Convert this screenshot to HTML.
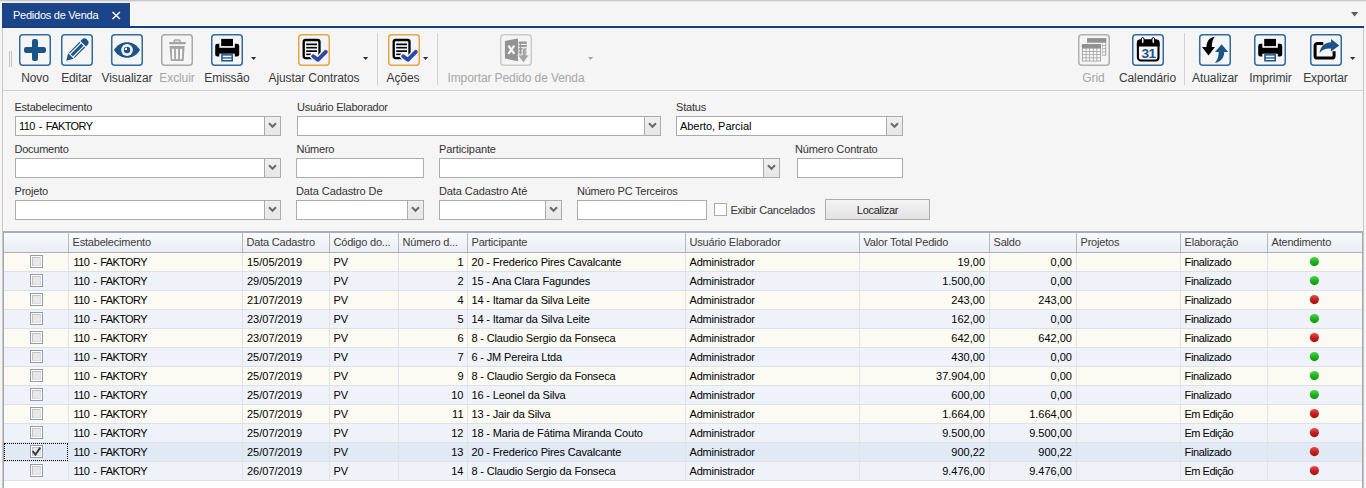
<!DOCTYPE html><html><head><meta charset="utf-8"><style>
html,body{margin:0;padding:0;}
body{width:1366px;height:488px;overflow:hidden;position:relative;background:#f5f5f5;font-family:"Liberation Sans",sans-serif;}
.t{position:absolute;white-space:nowrap;font-family:"Liberation Sans",sans-serif;}
.r{position:absolute;}
svg{position:absolute;}
</style></head><body>
<div class="r" style="left:0px;top:0px;width:1366px;height:1px;background:#c9c9c9;"></div>
<div class="r" style="left:0px;top:1px;width:1366px;height:1px;background:#e6e6e6;"></div>
<div class="r" style="left:2px;top:3px;width:128px;height:25px;background:#1b4588;"></div>
<div class="r" style="left:130px;top:3px;width:1px;height:23px;background:#ffffff;"></div>
<div class="r" style="left:130px;top:25px;width:1234px;height:1px;background:#ffffff;"></div>
<div class="r" style="left:2px;top:26px;width:1362px;height:2px;background:#133f85;"></div>
<div class="t" style="left:13px;top:8.69px;font-size:11px;line-height:13px;color:#fff;letter-spacing:-0.25px;">Pedidos de Venda</div>
<svg style="left:111px;top:11px" width="11" height="9" viewBox="0 0 11 9"><path d="M1.5 1 L9 8 M9 1 L1.5 8" stroke="#fff" stroke-width="1.4"/></svg>
<svg style="left:1350px;top:12px" width="9" height="6" viewBox="0 0 9 6"><path d="M1 0 H8.2 L4.6 4.4 Z" fill="#5c5c5c"/></svg>
<div class="r" style="left:2px;top:28px;width:1px;height:460px;background:#c6c6c6;"></div>
<div class="r" style="left:1363px;top:28px;width:1px;height:460px;background:#c6c6c6;"></div>
<div class="r" style="left:3px;top:90px;width:1360px;height:1px;background:#cfcfcf;"></div>
<div class="r" style="left:3px;top:91px;width:1360px;height:1px;background:#fbfbfb;"></div>
<div class="r" style="left:9px;top:51px;width:1px;height:16px;background:#c4c4c4;"></div>
<div class="r" style="left:11px;top:51px;width:1px;height:16px;background:#c4c4c4;"></div>
<svg style="left:19px;top:34px" width="32" height="32" viewBox="0 0 32 32"><rect x="0.75" y="0.75" width="30.5" height="30.5" rx="3" ry="3" fill="none" stroke="#2f6b9c" stroke-width="1.5"/><rect x="13" y="5" width="6" height="22" rx="2.2" fill="#1a5488"/><rect x="5" y="13" width="22" height="6" rx="2.2" fill="#1a5488"/></svg>
<svg style="left:61px;top:34px" width="32" height="32" viewBox="0 0 32 32"><rect x="0.75" y="0.75" width="30.5" height="30.5" rx="3" ry="3" fill="none" stroke="#2f6b9c" stroke-width="1.5"/><g transform="rotate(-45 16 16)"><path d="M0.8 16 L7.4 12.1 L7.4 19.9 Z" fill="#1a5488"/><rect x="8.6" y="12.1" width="15" height="1.1" fill="#1a5488"/><rect x="8.6" y="14.5" width="15" height="3" fill="#1a5488"/><rect x="8.6" y="18.8" width="15" height="1.1" fill="#1a5488"/><path d="M24.8 12.1 H26.6 A3.9 3.9 0 0 1 26.6 19.9 H24.8 Z" fill="#1a5488"/></g></svg>
<svg style="left:111px;top:34px" width="32" height="32" viewBox="0 0 32 32"><rect x="0.75" y="0.75" width="30.5" height="30.5" rx="3" ry="3" fill="none" stroke="#2f6b9c" stroke-width="1.5"/><path d="M3 16 C9 5.6 23 5.6 29 16 C23 26.4 9 26.4 3 16 Z" fill="#1a5488"/><circle cx="16" cy="16" r="5.9" fill="#f5f5f5"/><circle cx="16" cy="16" r="3.2" fill="#1a5488"/><path d="M16 16 L16 13.6 A2.4 2.4 0 0 0 13.6 16 Z" fill="#f5f5f5"/></svg>
<svg style="left:161px;top:34px" width="32" height="32" viewBox="0 0 32 32"><rect x="0.75" y="0.75" width="30.5" height="30.5" rx="3" ry="3" fill="none" stroke="#a8a8a8" stroke-width="1.5"/><rect x="13.2" y="5.9" width="5.8" height="2.6" rx="1" fill="none" stroke="#a3a3a3" stroke-width="1.5"/><rect x="8" y="7.9" width="17" height="2.4" rx="1.2" fill="#a3a3a3"/><path d="M8.5 12 H23.6 L22.7 26 Q22.6 27 21.6 27 H10.8 Q9.8 27 9.7 26 Z" fill="#a3a3a3"/><path d="M10.8 14.8 H13.1 L13.2 25.2 H11.1 Z" fill="#f5f5f5"/><rect x="14.9" y="14.8" width="2.2" height="10.4" fill="#f5f5f5"/><path d="M19 14.8 H21.3 L21 25.2 H18.9 Z" fill="#f5f5f5"/></svg>
<svg style="left:211px;top:34px" width="32" height="32" viewBox="0 0 32 32"><rect x="0.75" y="0.75" width="30.5" height="30.5" rx="3" ry="3" fill="none" stroke="#2f6b9c" stroke-width="1.5"/><rect x="10.2" y="4.9" width="11.8" height="7.2" fill="#000"/><path d="M8.3 9.8 H6.5 A2.3 2.3 0 0 0 4.2 12.1 V20.3 A2.3 2.3 0 0 0 6.5 22.6 H8.3 Z" fill="#000"/><path d="M23.8 9.8 H25.9 A2.3 2.3 0 0 1 28.2 12.1 V20.3 A2.3 2.3 0 0 1 25.9 22.6 H23.8 Z" fill="#000"/><rect x="8" y="13.8" width="16" height="5.9" fill="#000"/><rect x="10.2" y="20.1" width="11.8" height="7.4" fill="#1a5488"/><rect x="11.7" y="21.6" width="8.8" height="1.7" fill="#f5f5f5"/><rect x="11.7" y="24.6" width="8.8" height="1.4" fill="#f5f5f5"/></svg>
<svg style="left:251px;top:57px" width="6" height="4" viewBox="0 0 6 4"><path d="M0 0 H5.2 L2.6 3 Z" fill="#2e2e2e"/></svg>
<svg style="left:298px;top:34px" width="32" height="32" viewBox="0 0 32 32"><rect x="0.75" y="0.75" width="30.5" height="30.5" rx="3" fill="#f2f4f9"/><rect x="5.7" y="6" width="15.8" height="18.1" rx="2" fill="none" stroke="#000" stroke-width="2.3"/><rect x="8.2" y="9.5" width="10.8" height="1.7" fill="#000"/><rect x="8.2" y="12.9" width="10.8" height="1.6" fill="#000"/><rect x="8.2" y="16.3" width="10.8" height="1.7" fill="#000"/><rect x="8.2" y="19.6" width="4.8" height="1.5" fill="#000"/><path d="M15.2 22.3 L19.8 25.8 L27.8 17.8" fill="none" stroke="#f2f4f9" stroke-width="6.4" stroke-linecap="round" stroke-linejoin="round"/><path d="M15.2 22.3 L19.8 25.8 L27.8 17.8" fill="none" stroke="#2e49a3" stroke-width="3.9" stroke-linecap="round" stroke-linejoin="round"/><rect x="0.75" y="0.75" width="30.5" height="30.5" rx="3" fill="none" stroke="#e8a63e" stroke-width="1.5"/></svg>
<svg style="left:363px;top:57px" width="6" height="4" viewBox="0 0 6 4"><path d="M0 0 H5.2 L2.6 3 Z" fill="#2e2e2e"/></svg>
<div class="r" style="left:377px;top:33px;width:1px;height:52px;background:#d2d2d2;"></div>
<svg style="left:388px;top:34px" width="32" height="32" viewBox="0 0 32 32"><rect x="0.75" y="0.75" width="30.5" height="30.5" rx="3" fill="#f2f4f9"/><rect x="5.7" y="6" width="15.8" height="18.1" rx="2" fill="none" stroke="#000" stroke-width="2.3"/><rect x="8.2" y="9.5" width="10.8" height="1.7" fill="#000"/><rect x="8.2" y="12.9" width="10.8" height="1.6" fill="#000"/><rect x="8.2" y="16.3" width="10.8" height="1.7" fill="#000"/><rect x="8.2" y="19.6" width="4.8" height="1.5" fill="#000"/><path d="M15.2 22.3 L19.8 25.8 L27.8 17.8" fill="none" stroke="#f2f4f9" stroke-width="6.4" stroke-linecap="round" stroke-linejoin="round"/><path d="M15.2 22.3 L19.8 25.8 L27.8 17.8" fill="none" stroke="#2e49a3" stroke-width="3.9" stroke-linecap="round" stroke-linejoin="round"/><rect x="0.75" y="0.75" width="30.5" height="30.5" rx="3" fill="none" stroke="#e8a63e" stroke-width="1.5"/></svg>
<svg style="left:423px;top:57px" width="6" height="4" viewBox="0 0 6 4"><path d="M0 0 H5.2 L2.6 3 Z" fill="#2e2e2e"/></svg>
<div class="r" style="left:437px;top:33px;width:1px;height:52px;background:#d2d2d2;"></div>
<svg style="left:500px;top:34px" width="32" height="32" viewBox="0 0 32 32"><rect x="0.75" y="0.75" width="30.5" height="30.5" rx="3" ry="3" fill="none" stroke="#cbcbcb" stroke-width="1.5"/><path d="M4.9 6.9 L18 4.6 V27.2 L4.9 24.6 Z" fill="#939393"/><path d="M8.4 11.6 L14.3 19.9 M14.3 11.6 L8.4 19.9" stroke="#f5f5f5" stroke-width="2.3"/><rect x="18.7" y="7.5" width="8.2" height="14.5" fill="#989898"/><rect x="18.7" y="9.9" width="1.3" height="1" fill="#f5f5f5"/><rect x="21" y="9.9" width="5.9" height="1" fill="#f5f5f5"/><rect x="18.7" y="13.1" width="1.3" height="1" fill="#f5f5f5"/><rect x="21" y="13.1" width="5.9" height="1" fill="#f5f5f5"/><rect x="18.7" y="16.3" width="1.3" height="1" fill="#f5f5f5"/><rect x="21" y="16.3" width="5.9" height="1" fill="#f5f5f5"/><rect x="18.7" y="19.4" width="1.3" height="1" fill="#f5f5f5"/><rect x="21" y="19.4" width="5.9" height="1" fill="#f5f5f5"/><path d="M22.3 15.2 L26.2 12.8 L26.2 21 L29.2 21 L23.4 28.9 L17.7 21 L22.3 21 Z" fill="#a4a4a4" stroke="#f5f5f5" stroke-width="0.8"/></svg>
<svg style="left:588px;top:57px" width="6" height="4" viewBox="0 0 6 4"><path d="M0 0 H5.2 L2.6 3 Z" fill="#a8a8a8"/></svg>
<svg style="left:1078px;top:34px" width="32" height="32" viewBox="0 0 32 32"><rect x="0.75" y="0.75" width="30.5" height="30.5" rx="3" ry="3" fill="none" stroke="#b0b0b0" stroke-width="1.5"/><rect x="9.2" y="4.3" width="19" height="17.3" fill="#9f9f9f"/><rect x="9.2" y="4.3" width="19" height="3.6" fill="#8f8f8f"/><rect x="10.10" y="8.80" width="2.80" height="2.38" fill="#f8f8f8"/><rect x="10.10" y="11.98" width="2.80" height="2.38" fill="#f8f8f8"/><rect x="10.10" y="15.15" width="2.80" height="2.38" fill="#f8f8f8"/><rect x="10.10" y="18.33" width="2.80" height="2.38" fill="#f8f8f8"/><rect x="13.70" y="8.80" width="2.80" height="2.38" fill="#f8f8f8"/><rect x="13.70" y="11.98" width="2.80" height="2.38" fill="#f8f8f8"/><rect x="13.70" y="15.15" width="2.80" height="2.38" fill="#f8f8f8"/><rect x="13.70" y="18.33" width="2.80" height="2.38" fill="#f8f8f8"/><rect x="17.30" y="8.80" width="2.80" height="2.38" fill="#f8f8f8"/><rect x="17.30" y="11.98" width="2.80" height="2.38" fill="#f8f8f8"/><rect x="17.30" y="15.15" width="2.80" height="2.38" fill="#f8f8f8"/><rect x="17.30" y="18.33" width="2.80" height="2.38" fill="#f8f8f8"/><rect x="20.90" y="8.80" width="2.80" height="2.38" fill="#f8f8f8"/><rect x="20.90" y="11.98" width="2.80" height="2.38" fill="#f8f8f8"/><rect x="20.90" y="15.15" width="2.80" height="2.38" fill="#f8f8f8"/><rect x="20.90" y="18.33" width="2.80" height="2.38" fill="#f8f8f8"/><rect x="24.50" y="8.80" width="2.80" height="2.38" fill="#f8f8f8"/><rect x="24.50" y="11.98" width="2.80" height="2.38" fill="#f8f8f8"/><rect x="24.50" y="15.15" width="2.80" height="2.38" fill="#f8f8f8"/><rect x="24.50" y="18.33" width="2.80" height="2.38" fill="#f8f8f8"/><rect x="2.9" y="9.2" width="21.1" height="19.3" fill="#f5f5f5"/><rect x="3.9" y="10.2" width="19.1" height="17.3" fill="#9f9f9f"/><rect x="3.9" y="10.2" width="19.1" height="3.6" fill="#8f8f8f"/><rect x="4.80" y="14.70" width="2.82" height="2.38" fill="#f8f8f8"/><rect x="4.80" y="17.88" width="2.82" height="2.38" fill="#f8f8f8"/><rect x="4.80" y="21.05" width="2.82" height="2.38" fill="#f8f8f8"/><rect x="4.80" y="24.23" width="2.82" height="2.38" fill="#f8f8f8"/><rect x="8.42" y="14.70" width="2.82" height="2.38" fill="#f8f8f8"/><rect x="8.42" y="17.88" width="2.82" height="2.38" fill="#f8f8f8"/><rect x="8.42" y="21.05" width="2.82" height="2.38" fill="#f8f8f8"/><rect x="8.42" y="24.23" width="2.82" height="2.38" fill="#f8f8f8"/><rect x="12.04" y="14.70" width="2.82" height="2.38" fill="#f8f8f8"/><rect x="12.04" y="17.88" width="2.82" height="2.38" fill="#f8f8f8"/><rect x="12.04" y="21.05" width="2.82" height="2.38" fill="#f8f8f8"/><rect x="12.04" y="24.23" width="2.82" height="2.38" fill="#f8f8f8"/><rect x="15.66" y="14.70" width="2.82" height="2.38" fill="#f8f8f8"/><rect x="15.66" y="17.88" width="2.82" height="2.38" fill="#f8f8f8"/><rect x="15.66" y="21.05" width="2.82" height="2.38" fill="#f8f8f8"/><rect x="15.66" y="24.23" width="2.82" height="2.38" fill="#f8f8f8"/><rect x="19.28" y="14.70" width="2.82" height="2.38" fill="#f8f8f8"/><rect x="19.28" y="17.88" width="2.82" height="2.38" fill="#f8f8f8"/><rect x="19.28" y="21.05" width="2.82" height="2.38" fill="#f8f8f8"/><rect x="19.28" y="24.23" width="2.82" height="2.38" fill="#f8f8f8"/></svg>
<svg style="left:1132px;top:34px" width="32" height="32" viewBox="0 0 32 32"><rect x="0.75" y="0.75" width="30.5" height="30.5" rx="3" ry="3" fill="none" stroke="#2f6b9c" stroke-width="1.5"/><rect x="5.9" y="6.6" width="20.6" height="19.9" rx="3" fill="none" stroke="#000" stroke-width="2.1"/><path d="M4.9 12.5 V8.6 A3 3 0 0 1 7.9 5.6 H24.5 A3 3 0 0 1 27.5 8.6 V12.5 Z" fill="#000"/><rect x="9.4" y="3.6" width="2.6" height="5.8" rx="1.3" fill="#f5f5f5" stroke="#000" stroke-width="1"/><rect x="20" y="3.6" width="2.6" height="5.8" rx="1.3" fill="#f5f5f5" stroke="#000" stroke-width="1"/><text x="16.5" y="23.8" text-anchor="middle" font-family="Liberation Sans" font-weight="bold" font-size="13.6" fill="#1a5488" letter-spacing="-0.5">31</text></svg>
<div class="r" style="left:1184px;top:33px;width:1px;height:52px;background:#d2d2d2;"></div>
<svg style="left:1199px;top:34px" width="32" height="32" viewBox="0 0 32 32"><rect x="0.75" y="0.75" width="30.5" height="30.5" rx="3" ry="3" fill="none" stroke="#2f6b9c" stroke-width="1.5"/><path d="M15.7 2.8 C10 3.5 7.5 8 7.5 13.1 L3 13.1 L9.5 21.6 L16 13.1 L12.8 13.1 C12.8 9 13.5 5.5 15.7 2.8 Z" fill="#000"/><path d="M16 28.9 C22 28 25.2 23.5 25.2 18 L29.2 18 L22.6 10.2 L16 18 L19.7 18 C19.7 22.5 18.5 26 16 28.9 Z" fill="#1a5488"/></svg>
<svg style="left:1254px;top:34px" width="32" height="32" viewBox="0 0 32 32"><rect x="0.75" y="0.75" width="30.5" height="30.5" rx="3" ry="3" fill="none" stroke="#2f6b9c" stroke-width="1.5"/><rect x="10.2" y="4.9" width="11.8" height="7.2" fill="#000"/><path d="M8.3 9.8 H6.5 A2.3 2.3 0 0 0 4.2 12.1 V20.3 A2.3 2.3 0 0 0 6.5 22.6 H8.3 Z" fill="#000"/><path d="M23.8 9.8 H25.9 A2.3 2.3 0 0 1 28.2 12.1 V20.3 A2.3 2.3 0 0 1 25.9 22.6 H23.8 Z" fill="#000"/><rect x="8" y="13.8" width="16" height="5.9" fill="#000"/><rect x="10.2" y="20.1" width="11.8" height="7.4" fill="#1a5488"/><rect x="11.7" y="21.6" width="8.8" height="1.7" fill="#f5f5f5"/><rect x="11.7" y="24.6" width="8.8" height="1.4" fill="#f5f5f5"/></svg>
<svg style="left:1310px;top:34px" width="32" height="32" viewBox="0 0 32 32"><rect x="0.75" y="0.75" width="30.5" height="30.5" rx="3" ry="3" fill="none" stroke="#2f6b9c" stroke-width="1.5"/><path d="M13.3 9.4 H7.3 A2.2 2.2 0 0 0 5.1 11.6 V21.9 A2.2 2.2 0 0 0 7.3 24.1 H21.9 A2.2 2.2 0 0 0 24.1 21.9 V17.2" fill="none" stroke="#000" stroke-width="3"/><path d="M9.6 19 C10.5 12 15 8.6 21 8.3 L21 4.9 L29.3 11.5 L21 17.6 L21 14.6 C16 14.3 12 15.8 9.6 19 Z" fill="#1a5488"/></svg>
<svg style="left:1350px;top:57px" width="6" height="4" viewBox="0 0 6 4"><path d="M0 0 H5.2 L2.6 3 Z" fill="#2e2e2e"/></svg>
<div class="t" style="left:-165px;width:400px;text-align:center;top:70.84px;font-size:12px;line-height:14px;color:#3a3a3a;letter-spacing:-0.1px;">Novo</div>
<div class="t" style="left:-123.5px;width:400px;text-align:center;top:70.84px;font-size:12px;line-height:14px;color:#3a3a3a;letter-spacing:-0.1px;">Editar</div>
<div class="t" style="left:-73px;width:400px;text-align:center;top:70.84px;font-size:12px;line-height:14px;color:#3a3a3a;letter-spacing:-0.1px;">Visualizar</div>
<div class="t" style="left:-23px;width:400px;text-align:center;top:70.84px;font-size:12px;line-height:14px;color:#a6a6a6;letter-spacing:-0.1px;">Excluir</div>
<div class="t" style="left:27px;width:400px;text-align:center;top:70.84px;font-size:12px;line-height:14px;color:#3a3a3a;letter-spacing:-0.1px;">Emissão</div>
<div class="t" style="left:114px;width:400px;text-align:center;top:70.84px;font-size:12px;line-height:14px;color:#3a3a3a;letter-spacing:-0.1px;">Ajustar Contratos</div>
<div class="t" style="left:203px;width:400px;text-align:center;top:70.84px;font-size:12px;line-height:14px;color:#3a3a3a;letter-spacing:-0.1px;">Ações</div>
<div class="t" style="left:316px;width:400px;text-align:center;top:70.84px;font-size:12px;line-height:14px;color:#a6a6a6;letter-spacing:-0.1px;">Importar Pedido de Venda</div>
<div class="t" style="left:893.5px;width:400px;text-align:center;top:70.84px;font-size:12px;line-height:14px;color:#a6a6a6;letter-spacing:-0.1px;">Grid</div>
<div class="t" style="left:947.5px;width:400px;text-align:center;top:70.84px;font-size:12px;line-height:14px;color:#3a3a3a;letter-spacing:-0.1px;">Calendário</div>
<div class="t" style="left:1015px;width:400px;text-align:center;top:70.84px;font-size:12px;line-height:14px;color:#3a3a3a;letter-spacing:-0.1px;">Atualizar</div>
<div class="t" style="left:1070.5px;width:400px;text-align:center;top:70.84px;font-size:12px;line-height:14px;color:#3a3a3a;letter-spacing:-0.1px;">Imprimir</div>
<div class="t" style="left:1125.5px;width:400px;text-align:center;top:70.84px;font-size:12px;line-height:14px;color:#3a3a3a;letter-spacing:-0.1px;">Exportar</div>
<div class="r" style="left:3px;top:92px;width:1px;height:139px;background:#fafafa;"></div>
<div class="t" style="left:14.5px;top:100.69px;font-size:11px;line-height:13px;color:#333;letter-spacing:-0.25px;">Estabelecimento</div>
<div class="r" style="left:15px;top:116px;width:266px;height:20px;background:#fff;border:1px solid #ababab;box-sizing:border-box;"></div>
<div class="r" style="left:264px;top:116px;width:17px;height:20px;background:linear-gradient(#efefef,#e6e6e6);border:1px solid #ababab;box-sizing:border-box;"></div>
<svg style="left:268px;top:122px" width="9" height="7" viewBox="0 0 9 7"><path d="M1 1.2 L4.5 4.8 L8 1.2" fill="none" stroke="#6a6a6a" stroke-width="2"/></svg>
<div class="t" style="left:19px;top:119.69px;font-size:11px;line-height:13px;color:#000;letter-spacing:-0.62px;word-spacing:1.6px;">110 - FAKTORY</div>
<div class="t" style="left:297px;top:100.69px;font-size:11px;line-height:13px;color:#333;letter-spacing:-0.22px;">Usuário Elaborador</div>
<div class="r" style="left:297px;top:116px;width:364px;height:20px;background:#fff;border:1px solid #ababab;box-sizing:border-box;"></div>
<div class="r" style="left:644px;top:116px;width:17px;height:20px;background:linear-gradient(#efefef,#e6e6e6);border:1px solid #ababab;box-sizing:border-box;"></div>
<svg style="left:648px;top:122px" width="9" height="7" viewBox="0 0 9 7"><path d="M1 1.2 L4.5 4.8 L8 1.2" fill="none" stroke="#6a6a6a" stroke-width="2"/></svg>
<div class="t" style="left:676px;top:100.69px;font-size:11px;line-height:13px;color:#333;letter-spacing:-0.2px;">Status</div>
<div class="r" style="left:676px;top:116px;width:227px;height:20px;background:#fff;border:1px solid #ababab;box-sizing:border-box;"></div>
<div class="r" style="left:886px;top:116px;width:17px;height:20px;background:linear-gradient(#efefef,#e6e6e6);border:1px solid #ababab;box-sizing:border-box;"></div>
<svg style="left:890px;top:122px" width="9" height="7" viewBox="0 0 9 7"><path d="M1 1.2 L4.5 4.8 L8 1.2" fill="none" stroke="#6a6a6a" stroke-width="2"/></svg>
<div class="t" style="left:680px;top:119.69px;font-size:11px;line-height:13px;color:#000;letter-spacing:-0.05px;">Aberto, Parcial</div>
<div class="t" style="left:14.5px;top:142.69px;font-size:11px;line-height:13px;color:#333;letter-spacing:-0.25px;">Documento</div>
<div class="r" style="left:15px;top:158px;width:266px;height:20px;background:#fff;border:1px solid #ababab;box-sizing:border-box;"></div>
<div class="r" style="left:264px;top:158px;width:17px;height:20px;background:linear-gradient(#efefef,#e6e6e6);border:1px solid #ababab;box-sizing:border-box;"></div>
<svg style="left:268px;top:164px" width="9" height="7" viewBox="0 0 9 7"><path d="M1 1.2 L4.5 4.8 L8 1.2" fill="none" stroke="#6a6a6a" stroke-width="2"/></svg>
<div class="t" style="left:296.5px;top:142.69px;font-size:11px;line-height:13px;color:#333;letter-spacing:-0.24px;">Número</div>
<div class="r" style="left:296px;top:158px;width:128px;height:20px;background:#fff;border:1px solid #ababab;box-sizing:border-box;"></div>
<div class="t" style="left:439px;top:142.69px;font-size:11px;line-height:13px;color:#333;letter-spacing:-0.1px;">Participante</div>
<div class="r" style="left:439px;top:158px;width:341px;height:20px;background:#fff;border:1px solid #ababab;box-sizing:border-box;"></div>
<div class="r" style="left:763px;top:158px;width:17px;height:20px;background:linear-gradient(#efefef,#e6e6e6);border:1px solid #ababab;box-sizing:border-box;"></div>
<svg style="left:767px;top:164px" width="9" height="7" viewBox="0 0 9 7"><path d="M1 1.2 L4.5 4.8 L8 1.2" fill="none" stroke="#6a6a6a" stroke-width="2"/></svg>
<div class="t" style="left:795px;top:142.69px;font-size:11px;line-height:13px;color:#333;letter-spacing:-0.12px;">Número Contrato</div>
<div class="r" style="left:797px;top:158px;width:106px;height:20px;background:#fff;border:1px solid #ababab;box-sizing:border-box;"></div>
<div class="t" style="left:14.5px;top:184.69px;font-size:11px;line-height:13px;color:#333;letter-spacing:-0.2px;">Projeto</div>
<div class="r" style="left:15px;top:200px;width:266px;height:20px;background:#fff;border:1px solid #ababab;box-sizing:border-box;"></div>
<div class="r" style="left:264px;top:200px;width:17px;height:20px;background:linear-gradient(#efefef,#e6e6e6);border:1px solid #ababab;box-sizing:border-box;"></div>
<svg style="left:268px;top:206px" width="9" height="7" viewBox="0 0 9 7"><path d="M1 1.2 L4.5 4.8 L8 1.2" fill="none" stroke="#6a6a6a" stroke-width="2"/></svg>
<div class="t" style="left:296px;top:184.69px;font-size:11px;line-height:13px;color:#333;letter-spacing:-0.1px;">Data Cadastro De</div>
<div class="r" style="left:296px;top:200px;width:128px;height:20px;background:#fff;border:1px solid #ababab;box-sizing:border-box;"></div>
<div class="r" style="left:407px;top:200px;width:17px;height:20px;background:linear-gradient(#efefef,#e6e6e6);border:1px solid #ababab;box-sizing:border-box;"></div>
<svg style="left:411px;top:206px" width="9" height="7" viewBox="0 0 9 7"><path d="M1 1.2 L4.5 4.8 L8 1.2" fill="none" stroke="#6a6a6a" stroke-width="2"/></svg>
<div class="t" style="left:439px;top:184.69px;font-size:11px;line-height:13px;color:#333;letter-spacing:-0.1px;">Data Cadastro Até</div>
<div class="r" style="left:439px;top:200px;width:123px;height:20px;background:#fff;border:1px solid #ababab;box-sizing:border-box;"></div>
<div class="r" style="left:545px;top:200px;width:17px;height:20px;background:linear-gradient(#efefef,#e6e6e6);border:1px solid #ababab;box-sizing:border-box;"></div>
<svg style="left:549px;top:206px" width="9" height="7" viewBox="0 0 9 7"><path d="M1 1.2 L4.5 4.8 L8 1.2" fill="none" stroke="#6a6a6a" stroke-width="2"/></svg>
<div class="t" style="left:577px;top:184.69px;font-size:11px;line-height:13px;color:#333;letter-spacing:-0.23px;">Número PC Terceiros</div>
<div class="r" style="left:577px;top:200px;width:130px;height:20px;background:#fff;border:1px solid #ababab;box-sizing:border-box;"></div>
<div class="r" style="left:714px;top:203px;width:13px;height:13px;background:#fff;border:1px solid #a9a9a9;box-sizing:border-box;"></div>
<div class="t" style="left:730.5px;top:203.69px;font-size:11px;line-height:13px;color:#333;letter-spacing:-0.25px;">Exibir Cancelados</div>
<div class="r" style="left:825px;top:199px;width:105px;height:21px;background:linear-gradient(#f3f3f3,#e3e3e3);border:1px solid #adadad;box-sizing:border-box;"></div>
<div class="t" style="left:677.5px;width:400px;text-align:center;top:203.69px;font-size:11px;line-height:13px;color:#222;letter-spacing:-0.3px;">Localizar</div>
<div class="r" style="left:3px;top:231px;width:1360px;height:2px;background:#a9aeb5;"></div>
<div class="r" style="left:3px;top:231px;width:1px;height:257px;background:#a4a9b0;"></div>
<div class="r" style="left:1362px;top:231px;width:1px;height:257px;background:#a4a9b0;"></div>
<div class="r" style="left:4px;top:233px;width:1358px;height:19px;background:linear-gradient(#f9fafc,#e9edf3);"></div>
<div class="r" style="left:4px;top:252px;width:1358px;height:1px;background:#acb2ba;"></div>
<div class="r" style="left:68px;top:233px;width:1px;height:19px;background:#b4bac2;"></div>
<div class="r" style="left:242px;top:233px;width:1px;height:19px;background:#b4bac2;"></div>
<div class="r" style="left:329px;top:233px;width:1px;height:19px;background:#b4bac2;"></div>
<div class="r" style="left:398px;top:233px;width:1px;height:19px;background:#b4bac2;"></div>
<div class="r" style="left:467px;top:233px;width:1px;height:19px;background:#b4bac2;"></div>
<div class="r" style="left:685px;top:233px;width:1px;height:19px;background:#b4bac2;"></div>
<div class="r" style="left:859px;top:233px;width:1px;height:19px;background:#b4bac2;"></div>
<div class="r" style="left:989px;top:233px;width:1px;height:19px;background:#b4bac2;"></div>
<div class="r" style="left:1076px;top:233px;width:1px;height:19px;background:#b4bac2;"></div>
<div class="r" style="left:1180px;top:233px;width:1px;height:19px;background:#b4bac2;"></div>
<div class="r" style="left:1267px;top:233px;width:1px;height:19px;background:#b4bac2;"></div>
<div class="t" style="left:72.5px;top:235.69px;font-size:11px;line-height:13px;color:#3b3b3b;letter-spacing:-0.2px;">Estabelecimento</div>
<div class="t" style="left:246.5px;top:235.69px;font-size:11px;line-height:13px;color:#3b3b3b;letter-spacing:-0.2px;">Data Cadastro</div>
<div class="t" style="left:333.5px;top:235.69px;font-size:11px;line-height:13px;color:#3b3b3b;letter-spacing:-0.2px;">Código do...</div>
<div class="t" style="left:402.5px;top:235.69px;font-size:11px;line-height:13px;color:#3b3b3b;letter-spacing:-0.2px;">Número d...</div>
<div class="t" style="left:471.5px;top:235.69px;font-size:11px;line-height:13px;color:#3b3b3b;letter-spacing:-0.2px;">Participante</div>
<div class="t" style="left:689.5px;top:235.69px;font-size:11px;line-height:13px;color:#3b3b3b;letter-spacing:-0.2px;">Usuário Elaborador</div>
<div class="t" style="left:863.5px;top:235.69px;font-size:11px;line-height:13px;color:#3b3b3b;letter-spacing:-0.2px;">Valor Total Pedido</div>
<div class="t" style="left:993.5px;top:235.69px;font-size:11px;line-height:13px;color:#3b3b3b;letter-spacing:-0.2px;">Saldo</div>
<div class="t" style="left:1080.5px;top:235.69px;font-size:11px;line-height:13px;color:#3b3b3b;letter-spacing:-0.2px;">Projetos</div>
<div class="t" style="left:1184.5px;top:235.69px;font-size:11px;line-height:13px;color:#3b3b3b;letter-spacing:-0.2px;">Elaboração</div>
<div class="t" style="left:1271.5px;top:235.69px;font-size:11px;line-height:13px;color:#3b3b3b;letter-spacing:-0.2px;">Atendimento</div>
<div class="r" style="left:4px;top:481px;width:1358px;height:7px;background:#ffffff;"></div>
<div class="r" style="left:4px;top:253px;width:1358px;height:18px;background:#fbfaf3;"></div>
<div class="r" style="left:4px;top:271px;width:1358px;height:1px;background:#dde0e5;"></div>
<div class="r" style="left:68px;top:253px;width:1px;height:18px;background:#dfe2e7;"></div>
<div class="r" style="left:242px;top:253px;width:1px;height:18px;background:#dfe2e7;"></div>
<div class="r" style="left:329px;top:253px;width:1px;height:18px;background:#dfe2e7;"></div>
<div class="r" style="left:398px;top:253px;width:1px;height:18px;background:#dfe2e7;"></div>
<div class="r" style="left:467px;top:253px;width:1px;height:18px;background:#dfe2e7;"></div>
<div class="r" style="left:685px;top:253px;width:1px;height:18px;background:#dfe2e7;"></div>
<div class="r" style="left:859px;top:253px;width:1px;height:18px;background:#dfe2e7;"></div>
<div class="r" style="left:989px;top:253px;width:1px;height:18px;background:#dfe2e7;"></div>
<div class="r" style="left:1076px;top:253px;width:1px;height:18px;background:#dfe2e7;"></div>
<div class="r" style="left:1180px;top:253px;width:1px;height:18px;background:#dfe2e7;"></div>
<div class="r" style="left:1267px;top:253px;width:1px;height:18px;background:#dfe2e7;"></div>
<div class="r" style="left:30px;top:255px;width:13px;height:13px;box-sizing:border-box;border:1px solid #949ca7;background:#fdfdfd"></div>
<div class="r" style="left:32px;top:257px;width:9px;height:9px;box-sizing:border-box;border:1px solid #c2c2c2;border-right-color:#dcdcdc;border-bottom-color:#dcdcdc;background:#e8e8e8"></div>
<div class="t" style="left:73.5px;top:255.69px;font-size:11px;line-height:13px;color:#000;letter-spacing:-0.62px;word-spacing:1.6px;">110 - FAKTORY</div>
<div class="t" style="left:247px;top:255.69px;font-size:11px;line-height:13px;color:#000;letter-spacing:0px;">15/05/2019</div>
<div class="t" style="left:333.5px;top:255.69px;font-size:11px;line-height:13px;color:#000;letter-spacing:-0.2px;">PV</div>
<div class="t" style="left:63.5px;width:400px;text-align:right;top:255.69px;font-size:11px;line-height:13px;color:#000;letter-spacing:0px;">1</div>
<div class="t" style="left:471.5px;top:255.69px;font-size:11px;line-height:13px;color:#000;letter-spacing:-0.16px;">20 - Frederico Pires Cavalcante</div>
<div class="t" style="left:689.5px;top:255.69px;font-size:11px;line-height:13px;color:#000;letter-spacing:-0.2px;">Administrador</div>
<div class="t" style="left:585px;width:400px;text-align:right;top:255.69px;font-size:11px;line-height:13px;color:#000;letter-spacing:0px;">19,00</div>
<div class="t" style="left:672px;width:400px;text-align:right;top:255.69px;font-size:11px;line-height:13px;color:#000;letter-spacing:0px;">0,00</div>
<div class="t" style="left:1184.5px;top:255.69px;font-size:11px;line-height:13px;color:#000;letter-spacing:-0.33px;">Finalizado</div>
<svg style="left:1309px;top:256px" width="11" height="11" viewBox="0 0 11 11"><defs><linearGradient id="g0" x1="0" y1="0" x2="0" y2="1"><stop offset="0" stop-color="#52d452"/><stop offset="0.5" stop-color="#1fb31f"/><stop offset="1" stop-color="#139413"/></linearGradient></defs><circle cx="5.4" cy="5.6" r="4.6" fill="url(#g0)"/></svg>
<div class="r" style="left:4px;top:272px;width:1358px;height:18px;background:#eff3f9;"></div>
<div class="r" style="left:4px;top:290px;width:1358px;height:1px;background:#dde0e5;"></div>
<div class="r" style="left:68px;top:272px;width:1px;height:18px;background:#dfe2e7;"></div>
<div class="r" style="left:242px;top:272px;width:1px;height:18px;background:#dfe2e7;"></div>
<div class="r" style="left:329px;top:272px;width:1px;height:18px;background:#dfe2e7;"></div>
<div class="r" style="left:398px;top:272px;width:1px;height:18px;background:#dfe2e7;"></div>
<div class="r" style="left:467px;top:272px;width:1px;height:18px;background:#dfe2e7;"></div>
<div class="r" style="left:685px;top:272px;width:1px;height:18px;background:#dfe2e7;"></div>
<div class="r" style="left:859px;top:272px;width:1px;height:18px;background:#dfe2e7;"></div>
<div class="r" style="left:989px;top:272px;width:1px;height:18px;background:#dfe2e7;"></div>
<div class="r" style="left:1076px;top:272px;width:1px;height:18px;background:#dfe2e7;"></div>
<div class="r" style="left:1180px;top:272px;width:1px;height:18px;background:#dfe2e7;"></div>
<div class="r" style="left:1267px;top:272px;width:1px;height:18px;background:#dfe2e7;"></div>
<div class="r" style="left:30px;top:274px;width:13px;height:13px;box-sizing:border-box;border:1px solid #949ca7;background:#fdfdfd"></div>
<div class="r" style="left:32px;top:276px;width:9px;height:9px;box-sizing:border-box;border:1px solid #c2c2c2;border-right-color:#dcdcdc;border-bottom-color:#dcdcdc;background:#e8e8e8"></div>
<div class="t" style="left:73.5px;top:274.69px;font-size:11px;line-height:13px;color:#000;letter-spacing:-0.62px;word-spacing:1.6px;">110 - FAKTORY</div>
<div class="t" style="left:247px;top:274.69px;font-size:11px;line-height:13px;color:#000;letter-spacing:0px;">29/05/2019</div>
<div class="t" style="left:333.5px;top:274.69px;font-size:11px;line-height:13px;color:#000;letter-spacing:-0.2px;">PV</div>
<div class="t" style="left:63.5px;width:400px;text-align:right;top:274.69px;font-size:11px;line-height:13px;color:#000;letter-spacing:0px;">2</div>
<div class="t" style="left:471.5px;top:274.69px;font-size:11px;line-height:13px;color:#000;letter-spacing:-0.16px;">15 - Ana Clara Fagundes</div>
<div class="t" style="left:689.5px;top:274.69px;font-size:11px;line-height:13px;color:#000;letter-spacing:-0.2px;">Administrador</div>
<div class="t" style="left:585px;width:400px;text-align:right;top:274.69px;font-size:11px;line-height:13px;color:#000;letter-spacing:0px;">1.500,00</div>
<div class="t" style="left:672px;width:400px;text-align:right;top:274.69px;font-size:11px;line-height:13px;color:#000;letter-spacing:0px;">0,00</div>
<div class="t" style="left:1184.5px;top:274.69px;font-size:11px;line-height:13px;color:#000;letter-spacing:-0.33px;">Finalizado</div>
<svg style="left:1309px;top:275px" width="11" height="11" viewBox="0 0 11 11"><defs><linearGradient id="g1" x1="0" y1="0" x2="0" y2="1"><stop offset="0" stop-color="#52d452"/><stop offset="0.5" stop-color="#1fb31f"/><stop offset="1" stop-color="#139413"/></linearGradient></defs><circle cx="5.4" cy="5.6" r="4.6" fill="url(#g1)"/></svg>
<div class="r" style="left:4px;top:291px;width:1358px;height:18px;background:#fbfaf3;"></div>
<div class="r" style="left:4px;top:309px;width:1358px;height:1px;background:#dde0e5;"></div>
<div class="r" style="left:68px;top:291px;width:1px;height:18px;background:#dfe2e7;"></div>
<div class="r" style="left:242px;top:291px;width:1px;height:18px;background:#dfe2e7;"></div>
<div class="r" style="left:329px;top:291px;width:1px;height:18px;background:#dfe2e7;"></div>
<div class="r" style="left:398px;top:291px;width:1px;height:18px;background:#dfe2e7;"></div>
<div class="r" style="left:467px;top:291px;width:1px;height:18px;background:#dfe2e7;"></div>
<div class="r" style="left:685px;top:291px;width:1px;height:18px;background:#dfe2e7;"></div>
<div class="r" style="left:859px;top:291px;width:1px;height:18px;background:#dfe2e7;"></div>
<div class="r" style="left:989px;top:291px;width:1px;height:18px;background:#dfe2e7;"></div>
<div class="r" style="left:1076px;top:291px;width:1px;height:18px;background:#dfe2e7;"></div>
<div class="r" style="left:1180px;top:291px;width:1px;height:18px;background:#dfe2e7;"></div>
<div class="r" style="left:1267px;top:291px;width:1px;height:18px;background:#dfe2e7;"></div>
<div class="r" style="left:30px;top:293px;width:13px;height:13px;box-sizing:border-box;border:1px solid #949ca7;background:#fdfdfd"></div>
<div class="r" style="left:32px;top:295px;width:9px;height:9px;box-sizing:border-box;border:1px solid #c2c2c2;border-right-color:#dcdcdc;border-bottom-color:#dcdcdc;background:#e8e8e8"></div>
<div class="t" style="left:73.5px;top:293.69px;font-size:11px;line-height:13px;color:#000;letter-spacing:-0.62px;word-spacing:1.6px;">110 - FAKTORY</div>
<div class="t" style="left:247px;top:293.69px;font-size:11px;line-height:13px;color:#000;letter-spacing:0px;">21/07/2019</div>
<div class="t" style="left:333.5px;top:293.69px;font-size:11px;line-height:13px;color:#000;letter-spacing:-0.2px;">PV</div>
<div class="t" style="left:63.5px;width:400px;text-align:right;top:293.69px;font-size:11px;line-height:13px;color:#000;letter-spacing:0px;">4</div>
<div class="t" style="left:471.5px;top:293.69px;font-size:11px;line-height:13px;color:#000;letter-spacing:-0.16px;">14 - Itamar da Silva Leite</div>
<div class="t" style="left:689.5px;top:293.69px;font-size:11px;line-height:13px;color:#000;letter-spacing:-0.2px;">Administrador</div>
<div class="t" style="left:585px;width:400px;text-align:right;top:293.69px;font-size:11px;line-height:13px;color:#000;letter-spacing:0px;">243,00</div>
<div class="t" style="left:672px;width:400px;text-align:right;top:293.69px;font-size:11px;line-height:13px;color:#000;letter-spacing:0px;">243,00</div>
<div class="t" style="left:1184.5px;top:293.69px;font-size:11px;line-height:13px;color:#000;letter-spacing:-0.33px;">Finalizado</div>
<svg style="left:1309px;top:294px" width="11" height="11" viewBox="0 0 11 11"><defs><linearGradient id="g2" x1="0" y1="0" x2="0" y2="1"><stop offset="0" stop-color="#e65050"/><stop offset="0.5" stop-color="#c81f1f"/><stop offset="1" stop-color="#9c1111"/></linearGradient></defs><circle cx="5.4" cy="5.6" r="4.6" fill="url(#g2)"/></svg>
<div class="r" style="left:4px;top:310px;width:1358px;height:18px;background:#eff3f9;"></div>
<div class="r" style="left:4px;top:328px;width:1358px;height:1px;background:#dde0e5;"></div>
<div class="r" style="left:68px;top:310px;width:1px;height:18px;background:#dfe2e7;"></div>
<div class="r" style="left:242px;top:310px;width:1px;height:18px;background:#dfe2e7;"></div>
<div class="r" style="left:329px;top:310px;width:1px;height:18px;background:#dfe2e7;"></div>
<div class="r" style="left:398px;top:310px;width:1px;height:18px;background:#dfe2e7;"></div>
<div class="r" style="left:467px;top:310px;width:1px;height:18px;background:#dfe2e7;"></div>
<div class="r" style="left:685px;top:310px;width:1px;height:18px;background:#dfe2e7;"></div>
<div class="r" style="left:859px;top:310px;width:1px;height:18px;background:#dfe2e7;"></div>
<div class="r" style="left:989px;top:310px;width:1px;height:18px;background:#dfe2e7;"></div>
<div class="r" style="left:1076px;top:310px;width:1px;height:18px;background:#dfe2e7;"></div>
<div class="r" style="left:1180px;top:310px;width:1px;height:18px;background:#dfe2e7;"></div>
<div class="r" style="left:1267px;top:310px;width:1px;height:18px;background:#dfe2e7;"></div>
<div class="r" style="left:30px;top:312px;width:13px;height:13px;box-sizing:border-box;border:1px solid #949ca7;background:#fdfdfd"></div>
<div class="r" style="left:32px;top:314px;width:9px;height:9px;box-sizing:border-box;border:1px solid #c2c2c2;border-right-color:#dcdcdc;border-bottom-color:#dcdcdc;background:#e8e8e8"></div>
<div class="t" style="left:73.5px;top:312.69px;font-size:11px;line-height:13px;color:#000;letter-spacing:-0.62px;word-spacing:1.6px;">110 - FAKTORY</div>
<div class="t" style="left:247px;top:312.69px;font-size:11px;line-height:13px;color:#000;letter-spacing:0px;">23/07/2019</div>
<div class="t" style="left:333.5px;top:312.69px;font-size:11px;line-height:13px;color:#000;letter-spacing:-0.2px;">PV</div>
<div class="t" style="left:63.5px;width:400px;text-align:right;top:312.69px;font-size:11px;line-height:13px;color:#000;letter-spacing:0px;">5</div>
<div class="t" style="left:471.5px;top:312.69px;font-size:11px;line-height:13px;color:#000;letter-spacing:-0.16px;">14 - Itamar da Silva Leite</div>
<div class="t" style="left:689.5px;top:312.69px;font-size:11px;line-height:13px;color:#000;letter-spacing:-0.2px;">Administrador</div>
<div class="t" style="left:585px;width:400px;text-align:right;top:312.69px;font-size:11px;line-height:13px;color:#000;letter-spacing:0px;">162,00</div>
<div class="t" style="left:672px;width:400px;text-align:right;top:312.69px;font-size:11px;line-height:13px;color:#000;letter-spacing:0px;">0,00</div>
<div class="t" style="left:1184.5px;top:312.69px;font-size:11px;line-height:13px;color:#000;letter-spacing:-0.33px;">Finalizado</div>
<svg style="left:1309px;top:313px" width="11" height="11" viewBox="0 0 11 11"><defs><linearGradient id="g3" x1="0" y1="0" x2="0" y2="1"><stop offset="0" stop-color="#52d452"/><stop offset="0.5" stop-color="#1fb31f"/><stop offset="1" stop-color="#139413"/></linearGradient></defs><circle cx="5.4" cy="5.6" r="4.6" fill="url(#g3)"/></svg>
<div class="r" style="left:4px;top:329px;width:1358px;height:18px;background:#fbfaf3;"></div>
<div class="r" style="left:4px;top:347px;width:1358px;height:1px;background:#dde0e5;"></div>
<div class="r" style="left:68px;top:329px;width:1px;height:18px;background:#dfe2e7;"></div>
<div class="r" style="left:242px;top:329px;width:1px;height:18px;background:#dfe2e7;"></div>
<div class="r" style="left:329px;top:329px;width:1px;height:18px;background:#dfe2e7;"></div>
<div class="r" style="left:398px;top:329px;width:1px;height:18px;background:#dfe2e7;"></div>
<div class="r" style="left:467px;top:329px;width:1px;height:18px;background:#dfe2e7;"></div>
<div class="r" style="left:685px;top:329px;width:1px;height:18px;background:#dfe2e7;"></div>
<div class="r" style="left:859px;top:329px;width:1px;height:18px;background:#dfe2e7;"></div>
<div class="r" style="left:989px;top:329px;width:1px;height:18px;background:#dfe2e7;"></div>
<div class="r" style="left:1076px;top:329px;width:1px;height:18px;background:#dfe2e7;"></div>
<div class="r" style="left:1180px;top:329px;width:1px;height:18px;background:#dfe2e7;"></div>
<div class="r" style="left:1267px;top:329px;width:1px;height:18px;background:#dfe2e7;"></div>
<div class="r" style="left:30px;top:331px;width:13px;height:13px;box-sizing:border-box;border:1px solid #949ca7;background:#fdfdfd"></div>
<div class="r" style="left:32px;top:333px;width:9px;height:9px;box-sizing:border-box;border:1px solid #c2c2c2;border-right-color:#dcdcdc;border-bottom-color:#dcdcdc;background:#e8e8e8"></div>
<div class="t" style="left:73.5px;top:331.69px;font-size:11px;line-height:13px;color:#000;letter-spacing:-0.62px;word-spacing:1.6px;">110 - FAKTORY</div>
<div class="t" style="left:247px;top:331.69px;font-size:11px;line-height:13px;color:#000;letter-spacing:0px;">23/07/2019</div>
<div class="t" style="left:333.5px;top:331.69px;font-size:11px;line-height:13px;color:#000;letter-spacing:-0.2px;">PV</div>
<div class="t" style="left:63.5px;width:400px;text-align:right;top:331.69px;font-size:11px;line-height:13px;color:#000;letter-spacing:0px;">6</div>
<div class="t" style="left:471.5px;top:331.69px;font-size:11px;line-height:13px;color:#000;letter-spacing:-0.16px;">8 - Claudio Sergio da Fonseca</div>
<div class="t" style="left:689.5px;top:331.69px;font-size:11px;line-height:13px;color:#000;letter-spacing:-0.2px;">Administrador</div>
<div class="t" style="left:585px;width:400px;text-align:right;top:331.69px;font-size:11px;line-height:13px;color:#000;letter-spacing:0px;">642,00</div>
<div class="t" style="left:672px;width:400px;text-align:right;top:331.69px;font-size:11px;line-height:13px;color:#000;letter-spacing:0px;">642,00</div>
<div class="t" style="left:1184.5px;top:331.69px;font-size:11px;line-height:13px;color:#000;letter-spacing:-0.33px;">Finalizado</div>
<svg style="left:1309px;top:332px" width="11" height="11" viewBox="0 0 11 11"><defs><linearGradient id="g4" x1="0" y1="0" x2="0" y2="1"><stop offset="0" stop-color="#e65050"/><stop offset="0.5" stop-color="#c81f1f"/><stop offset="1" stop-color="#9c1111"/></linearGradient></defs><circle cx="5.4" cy="5.6" r="4.6" fill="url(#g4)"/></svg>
<div class="r" style="left:4px;top:348px;width:1358px;height:18px;background:#eff3f9;"></div>
<div class="r" style="left:4px;top:366px;width:1358px;height:1px;background:#dde0e5;"></div>
<div class="r" style="left:68px;top:348px;width:1px;height:18px;background:#dfe2e7;"></div>
<div class="r" style="left:242px;top:348px;width:1px;height:18px;background:#dfe2e7;"></div>
<div class="r" style="left:329px;top:348px;width:1px;height:18px;background:#dfe2e7;"></div>
<div class="r" style="left:398px;top:348px;width:1px;height:18px;background:#dfe2e7;"></div>
<div class="r" style="left:467px;top:348px;width:1px;height:18px;background:#dfe2e7;"></div>
<div class="r" style="left:685px;top:348px;width:1px;height:18px;background:#dfe2e7;"></div>
<div class="r" style="left:859px;top:348px;width:1px;height:18px;background:#dfe2e7;"></div>
<div class="r" style="left:989px;top:348px;width:1px;height:18px;background:#dfe2e7;"></div>
<div class="r" style="left:1076px;top:348px;width:1px;height:18px;background:#dfe2e7;"></div>
<div class="r" style="left:1180px;top:348px;width:1px;height:18px;background:#dfe2e7;"></div>
<div class="r" style="left:1267px;top:348px;width:1px;height:18px;background:#dfe2e7;"></div>
<div class="r" style="left:30px;top:350px;width:13px;height:13px;box-sizing:border-box;border:1px solid #949ca7;background:#fdfdfd"></div>
<div class="r" style="left:32px;top:352px;width:9px;height:9px;box-sizing:border-box;border:1px solid #c2c2c2;border-right-color:#dcdcdc;border-bottom-color:#dcdcdc;background:#e8e8e8"></div>
<div class="t" style="left:73.5px;top:350.69px;font-size:11px;line-height:13px;color:#000;letter-spacing:-0.62px;word-spacing:1.6px;">110 - FAKTORY</div>
<div class="t" style="left:247px;top:350.69px;font-size:11px;line-height:13px;color:#000;letter-spacing:0px;">25/07/2019</div>
<div class="t" style="left:333.5px;top:350.69px;font-size:11px;line-height:13px;color:#000;letter-spacing:-0.2px;">PV</div>
<div class="t" style="left:63.5px;width:400px;text-align:right;top:350.69px;font-size:11px;line-height:13px;color:#000;letter-spacing:0px;">7</div>
<div class="t" style="left:471.5px;top:350.69px;font-size:11px;line-height:13px;color:#000;letter-spacing:-0.16px;">6 - JM Pereira Ltda</div>
<div class="t" style="left:689.5px;top:350.69px;font-size:11px;line-height:13px;color:#000;letter-spacing:-0.2px;">Administrador</div>
<div class="t" style="left:585px;width:400px;text-align:right;top:350.69px;font-size:11px;line-height:13px;color:#000;letter-spacing:0px;">430,00</div>
<div class="t" style="left:672px;width:400px;text-align:right;top:350.69px;font-size:11px;line-height:13px;color:#000;letter-spacing:0px;">0,00</div>
<div class="t" style="left:1184.5px;top:350.69px;font-size:11px;line-height:13px;color:#000;letter-spacing:-0.33px;">Finalizado</div>
<svg style="left:1309px;top:351px" width="11" height="11" viewBox="0 0 11 11"><defs><linearGradient id="g5" x1="0" y1="0" x2="0" y2="1"><stop offset="0" stop-color="#52d452"/><stop offset="0.5" stop-color="#1fb31f"/><stop offset="1" stop-color="#139413"/></linearGradient></defs><circle cx="5.4" cy="5.6" r="4.6" fill="url(#g5)"/></svg>
<div class="r" style="left:4px;top:367px;width:1358px;height:18px;background:#fbfaf3;"></div>
<div class="r" style="left:4px;top:385px;width:1358px;height:1px;background:#dde0e5;"></div>
<div class="r" style="left:68px;top:367px;width:1px;height:18px;background:#dfe2e7;"></div>
<div class="r" style="left:242px;top:367px;width:1px;height:18px;background:#dfe2e7;"></div>
<div class="r" style="left:329px;top:367px;width:1px;height:18px;background:#dfe2e7;"></div>
<div class="r" style="left:398px;top:367px;width:1px;height:18px;background:#dfe2e7;"></div>
<div class="r" style="left:467px;top:367px;width:1px;height:18px;background:#dfe2e7;"></div>
<div class="r" style="left:685px;top:367px;width:1px;height:18px;background:#dfe2e7;"></div>
<div class="r" style="left:859px;top:367px;width:1px;height:18px;background:#dfe2e7;"></div>
<div class="r" style="left:989px;top:367px;width:1px;height:18px;background:#dfe2e7;"></div>
<div class="r" style="left:1076px;top:367px;width:1px;height:18px;background:#dfe2e7;"></div>
<div class="r" style="left:1180px;top:367px;width:1px;height:18px;background:#dfe2e7;"></div>
<div class="r" style="left:1267px;top:367px;width:1px;height:18px;background:#dfe2e7;"></div>
<div class="r" style="left:30px;top:369px;width:13px;height:13px;box-sizing:border-box;border:1px solid #949ca7;background:#fdfdfd"></div>
<div class="r" style="left:32px;top:371px;width:9px;height:9px;box-sizing:border-box;border:1px solid #c2c2c2;border-right-color:#dcdcdc;border-bottom-color:#dcdcdc;background:#e8e8e8"></div>
<div class="t" style="left:73.5px;top:369.69px;font-size:11px;line-height:13px;color:#000;letter-spacing:-0.62px;word-spacing:1.6px;">110 - FAKTORY</div>
<div class="t" style="left:247px;top:369.69px;font-size:11px;line-height:13px;color:#000;letter-spacing:0px;">25/07/2019</div>
<div class="t" style="left:333.5px;top:369.69px;font-size:11px;line-height:13px;color:#000;letter-spacing:-0.2px;">PV</div>
<div class="t" style="left:63.5px;width:400px;text-align:right;top:369.69px;font-size:11px;line-height:13px;color:#000;letter-spacing:0px;">9</div>
<div class="t" style="left:471.5px;top:369.69px;font-size:11px;line-height:13px;color:#000;letter-spacing:-0.16px;">8 - Claudio Sergio da Fonseca</div>
<div class="t" style="left:689.5px;top:369.69px;font-size:11px;line-height:13px;color:#000;letter-spacing:-0.2px;">Administrador</div>
<div class="t" style="left:585px;width:400px;text-align:right;top:369.69px;font-size:11px;line-height:13px;color:#000;letter-spacing:0px;">37.904,00</div>
<div class="t" style="left:672px;width:400px;text-align:right;top:369.69px;font-size:11px;line-height:13px;color:#000;letter-spacing:0px;">0,00</div>
<div class="t" style="left:1184.5px;top:369.69px;font-size:11px;line-height:13px;color:#000;letter-spacing:-0.33px;">Finalizado</div>
<svg style="left:1309px;top:370px" width="11" height="11" viewBox="0 0 11 11"><defs><linearGradient id="g6" x1="0" y1="0" x2="0" y2="1"><stop offset="0" stop-color="#52d452"/><stop offset="0.5" stop-color="#1fb31f"/><stop offset="1" stop-color="#139413"/></linearGradient></defs><circle cx="5.4" cy="5.6" r="4.6" fill="url(#g6)"/></svg>
<div class="r" style="left:4px;top:386px;width:1358px;height:18px;background:#eff3f9;"></div>
<div class="r" style="left:4px;top:404px;width:1358px;height:1px;background:#dde0e5;"></div>
<div class="r" style="left:68px;top:386px;width:1px;height:18px;background:#dfe2e7;"></div>
<div class="r" style="left:242px;top:386px;width:1px;height:18px;background:#dfe2e7;"></div>
<div class="r" style="left:329px;top:386px;width:1px;height:18px;background:#dfe2e7;"></div>
<div class="r" style="left:398px;top:386px;width:1px;height:18px;background:#dfe2e7;"></div>
<div class="r" style="left:467px;top:386px;width:1px;height:18px;background:#dfe2e7;"></div>
<div class="r" style="left:685px;top:386px;width:1px;height:18px;background:#dfe2e7;"></div>
<div class="r" style="left:859px;top:386px;width:1px;height:18px;background:#dfe2e7;"></div>
<div class="r" style="left:989px;top:386px;width:1px;height:18px;background:#dfe2e7;"></div>
<div class="r" style="left:1076px;top:386px;width:1px;height:18px;background:#dfe2e7;"></div>
<div class="r" style="left:1180px;top:386px;width:1px;height:18px;background:#dfe2e7;"></div>
<div class="r" style="left:1267px;top:386px;width:1px;height:18px;background:#dfe2e7;"></div>
<div class="r" style="left:30px;top:388px;width:13px;height:13px;box-sizing:border-box;border:1px solid #949ca7;background:#fdfdfd"></div>
<div class="r" style="left:32px;top:390px;width:9px;height:9px;box-sizing:border-box;border:1px solid #c2c2c2;border-right-color:#dcdcdc;border-bottom-color:#dcdcdc;background:#e8e8e8"></div>
<div class="t" style="left:73.5px;top:388.69px;font-size:11px;line-height:13px;color:#000;letter-spacing:-0.62px;word-spacing:1.6px;">110 - FAKTORY</div>
<div class="t" style="left:247px;top:388.69px;font-size:11px;line-height:13px;color:#000;letter-spacing:0px;">25/07/2019</div>
<div class="t" style="left:333.5px;top:388.69px;font-size:11px;line-height:13px;color:#000;letter-spacing:-0.2px;">PV</div>
<div class="t" style="left:63.5px;width:400px;text-align:right;top:388.69px;font-size:11px;line-height:13px;color:#000;letter-spacing:0px;">10</div>
<div class="t" style="left:471.5px;top:388.69px;font-size:11px;line-height:13px;color:#000;letter-spacing:-0.16px;">16 - Leonel da Silva</div>
<div class="t" style="left:689.5px;top:388.69px;font-size:11px;line-height:13px;color:#000;letter-spacing:-0.2px;">Administrador</div>
<div class="t" style="left:585px;width:400px;text-align:right;top:388.69px;font-size:11px;line-height:13px;color:#000;letter-spacing:0px;">600,00</div>
<div class="t" style="left:672px;width:400px;text-align:right;top:388.69px;font-size:11px;line-height:13px;color:#000;letter-spacing:0px;">0,00</div>
<div class="t" style="left:1184.5px;top:388.69px;font-size:11px;line-height:13px;color:#000;letter-spacing:-0.33px;">Finalizado</div>
<svg style="left:1309px;top:389px" width="11" height="11" viewBox="0 0 11 11"><defs><linearGradient id="g7" x1="0" y1="0" x2="0" y2="1"><stop offset="0" stop-color="#52d452"/><stop offset="0.5" stop-color="#1fb31f"/><stop offset="1" stop-color="#139413"/></linearGradient></defs><circle cx="5.4" cy="5.6" r="4.6" fill="url(#g7)"/></svg>
<div class="r" style="left:4px;top:405px;width:1358px;height:18px;background:#fbfaf3;"></div>
<div class="r" style="left:4px;top:423px;width:1358px;height:1px;background:#dde0e5;"></div>
<div class="r" style="left:68px;top:405px;width:1px;height:18px;background:#dfe2e7;"></div>
<div class="r" style="left:242px;top:405px;width:1px;height:18px;background:#dfe2e7;"></div>
<div class="r" style="left:329px;top:405px;width:1px;height:18px;background:#dfe2e7;"></div>
<div class="r" style="left:398px;top:405px;width:1px;height:18px;background:#dfe2e7;"></div>
<div class="r" style="left:467px;top:405px;width:1px;height:18px;background:#dfe2e7;"></div>
<div class="r" style="left:685px;top:405px;width:1px;height:18px;background:#dfe2e7;"></div>
<div class="r" style="left:859px;top:405px;width:1px;height:18px;background:#dfe2e7;"></div>
<div class="r" style="left:989px;top:405px;width:1px;height:18px;background:#dfe2e7;"></div>
<div class="r" style="left:1076px;top:405px;width:1px;height:18px;background:#dfe2e7;"></div>
<div class="r" style="left:1180px;top:405px;width:1px;height:18px;background:#dfe2e7;"></div>
<div class="r" style="left:1267px;top:405px;width:1px;height:18px;background:#dfe2e7;"></div>
<div class="r" style="left:30px;top:407px;width:13px;height:13px;box-sizing:border-box;border:1px solid #949ca7;background:#fdfdfd"></div>
<div class="r" style="left:32px;top:409px;width:9px;height:9px;box-sizing:border-box;border:1px solid #c2c2c2;border-right-color:#dcdcdc;border-bottom-color:#dcdcdc;background:#e8e8e8"></div>
<div class="t" style="left:73.5px;top:407.69px;font-size:11px;line-height:13px;color:#000;letter-spacing:-0.62px;word-spacing:1.6px;">110 - FAKTORY</div>
<div class="t" style="left:247px;top:407.69px;font-size:11px;line-height:13px;color:#000;letter-spacing:0px;">25/07/2019</div>
<div class="t" style="left:333.5px;top:407.69px;font-size:11px;line-height:13px;color:#000;letter-spacing:-0.2px;">PV</div>
<div class="t" style="left:63.5px;width:400px;text-align:right;top:407.69px;font-size:11px;line-height:13px;color:#000;letter-spacing:0px;">11</div>
<div class="t" style="left:471.5px;top:407.69px;font-size:11px;line-height:13px;color:#000;letter-spacing:-0.16px;">13 - Jair da Silva</div>
<div class="t" style="left:689.5px;top:407.69px;font-size:11px;line-height:13px;color:#000;letter-spacing:-0.2px;">Administrador</div>
<div class="t" style="left:585px;width:400px;text-align:right;top:407.69px;font-size:11px;line-height:13px;color:#000;letter-spacing:0px;">1.664,00</div>
<div class="t" style="left:672px;width:400px;text-align:right;top:407.69px;font-size:11px;line-height:13px;color:#000;letter-spacing:0px;">1.664,00</div>
<div class="t" style="left:1184.5px;top:407.69px;font-size:11px;line-height:13px;color:#000;letter-spacing:-0.5px;">Em Edição</div>
<svg style="left:1309px;top:408px" width="11" height="11" viewBox="0 0 11 11"><defs><linearGradient id="g8" x1="0" y1="0" x2="0" y2="1"><stop offset="0" stop-color="#e65050"/><stop offset="0.5" stop-color="#c81f1f"/><stop offset="1" stop-color="#9c1111"/></linearGradient></defs><circle cx="5.4" cy="5.6" r="4.6" fill="url(#g8)"/></svg>
<div class="r" style="left:4px;top:424px;width:1358px;height:18px;background:#eff3f9;"></div>
<div class="r" style="left:4px;top:442px;width:1358px;height:1px;background:#dde0e5;"></div>
<div class="r" style="left:68px;top:424px;width:1px;height:18px;background:#dfe2e7;"></div>
<div class="r" style="left:242px;top:424px;width:1px;height:18px;background:#dfe2e7;"></div>
<div class="r" style="left:329px;top:424px;width:1px;height:18px;background:#dfe2e7;"></div>
<div class="r" style="left:398px;top:424px;width:1px;height:18px;background:#dfe2e7;"></div>
<div class="r" style="left:467px;top:424px;width:1px;height:18px;background:#dfe2e7;"></div>
<div class="r" style="left:685px;top:424px;width:1px;height:18px;background:#dfe2e7;"></div>
<div class="r" style="left:859px;top:424px;width:1px;height:18px;background:#dfe2e7;"></div>
<div class="r" style="left:989px;top:424px;width:1px;height:18px;background:#dfe2e7;"></div>
<div class="r" style="left:1076px;top:424px;width:1px;height:18px;background:#dfe2e7;"></div>
<div class="r" style="left:1180px;top:424px;width:1px;height:18px;background:#dfe2e7;"></div>
<div class="r" style="left:1267px;top:424px;width:1px;height:18px;background:#dfe2e7;"></div>
<div class="r" style="left:30px;top:426px;width:13px;height:13px;box-sizing:border-box;border:1px solid #949ca7;background:#fdfdfd"></div>
<div class="r" style="left:32px;top:428px;width:9px;height:9px;box-sizing:border-box;border:1px solid #c2c2c2;border-right-color:#dcdcdc;border-bottom-color:#dcdcdc;background:#e8e8e8"></div>
<div class="t" style="left:73.5px;top:426.69px;font-size:11px;line-height:13px;color:#000;letter-spacing:-0.62px;word-spacing:1.6px;">110 - FAKTORY</div>
<div class="t" style="left:247px;top:426.69px;font-size:11px;line-height:13px;color:#000;letter-spacing:0px;">25/07/2019</div>
<div class="t" style="left:333.5px;top:426.69px;font-size:11px;line-height:13px;color:#000;letter-spacing:-0.2px;">PV</div>
<div class="t" style="left:63.5px;width:400px;text-align:right;top:426.69px;font-size:11px;line-height:13px;color:#000;letter-spacing:0px;">12</div>
<div class="t" style="left:471.5px;top:426.69px;font-size:11px;line-height:13px;color:#000;letter-spacing:-0.16px;">18 - Maria de Fátima Miranda Couto</div>
<div class="t" style="left:689.5px;top:426.69px;font-size:11px;line-height:13px;color:#000;letter-spacing:-0.2px;">Administrador</div>
<div class="t" style="left:585px;width:400px;text-align:right;top:426.69px;font-size:11px;line-height:13px;color:#000;letter-spacing:0px;">9.500,00</div>
<div class="t" style="left:672px;width:400px;text-align:right;top:426.69px;font-size:11px;line-height:13px;color:#000;letter-spacing:0px;">9.500,00</div>
<div class="t" style="left:1184.5px;top:426.69px;font-size:11px;line-height:13px;color:#000;letter-spacing:-0.5px;">Em Edição</div>
<svg style="left:1309px;top:427px" width="11" height="11" viewBox="0 0 11 11"><defs><linearGradient id="g9" x1="0" y1="0" x2="0" y2="1"><stop offset="0" stop-color="#e65050"/><stop offset="0.5" stop-color="#c81f1f"/><stop offset="1" stop-color="#9c1111"/></linearGradient></defs><circle cx="5.4" cy="5.6" r="4.6" fill="url(#g9)"/></svg>
<div class="r" style="left:4px;top:443px;width:1358px;height:18px;background:#e1e9f4;"></div>
<div class="r" style="left:4px;top:461px;width:1358px;height:1px;background:#dde0e5;"></div>
<div class="r" style="left:68px;top:443px;width:1px;height:18px;background:#dfe2e7;"></div>
<div class="r" style="left:242px;top:443px;width:1px;height:18px;background:#dfe2e7;"></div>
<div class="r" style="left:329px;top:443px;width:1px;height:18px;background:#dfe2e7;"></div>
<div class="r" style="left:398px;top:443px;width:1px;height:18px;background:#dfe2e7;"></div>
<div class="r" style="left:467px;top:443px;width:1px;height:18px;background:#dfe2e7;"></div>
<div class="r" style="left:685px;top:443px;width:1px;height:18px;background:#dfe2e7;"></div>
<div class="r" style="left:859px;top:443px;width:1px;height:18px;background:#dfe2e7;"></div>
<div class="r" style="left:989px;top:443px;width:1px;height:18px;background:#dfe2e7;"></div>
<div class="r" style="left:1076px;top:443px;width:1px;height:18px;background:#dfe2e7;"></div>
<div class="r" style="left:1180px;top:443px;width:1px;height:18px;background:#dfe2e7;"></div>
<div class="r" style="left:1267px;top:443px;width:1px;height:18px;background:#dfe2e7;"></div>
<div class="r" style="left:30px;top:445px;width:13px;height:13px;box-sizing:border-box;border:1px solid #949ca7;background:#fdfdfd"></div>
<div class="r" style="left:32px;top:447px;width:9px;height:9px;box-sizing:border-box;border:1px solid #c2c2c2;border-right-color:#dcdcdc;border-bottom-color:#dcdcdc;background:#e8e8e8"></div>
<svg style="left:30px;top:445px" width="13" height="13" viewBox="0 0 13 13"><path d="M2.6 6 L5.4 9.6 L10.3 2.6" fill="none" stroke="#3a3a3a" stroke-width="1.9" stroke-linejoin="miter"/></svg>
<div class="r" style="left:4px;top:443px;width:64px;height:18px;box-sizing:border-box;border:1px dotted #000"></div>
<div class="t" style="left:73.5px;top:445.69px;font-size:11px;line-height:13px;color:#000;letter-spacing:-0.62px;word-spacing:1.6px;">110 - FAKTORY</div>
<div class="t" style="left:247px;top:445.69px;font-size:11px;line-height:13px;color:#000;letter-spacing:0px;">25/07/2019</div>
<div class="t" style="left:333.5px;top:445.69px;font-size:11px;line-height:13px;color:#000;letter-spacing:-0.2px;">PV</div>
<div class="t" style="left:63.5px;width:400px;text-align:right;top:445.69px;font-size:11px;line-height:13px;color:#000;letter-spacing:0px;">13</div>
<div class="t" style="left:471.5px;top:445.69px;font-size:11px;line-height:13px;color:#000;letter-spacing:-0.16px;">20 - Frederico Pires Cavalcante</div>
<div class="t" style="left:689.5px;top:445.69px;font-size:11px;line-height:13px;color:#000;letter-spacing:-0.2px;">Administrador</div>
<div class="t" style="left:585px;width:400px;text-align:right;top:445.69px;font-size:11px;line-height:13px;color:#000;letter-spacing:0px;">900,22</div>
<div class="t" style="left:672px;width:400px;text-align:right;top:445.69px;font-size:11px;line-height:13px;color:#000;letter-spacing:0px;">900,22</div>
<div class="t" style="left:1184.5px;top:445.69px;font-size:11px;line-height:13px;color:#000;letter-spacing:-0.33px;">Finalizado</div>
<svg style="left:1309px;top:446px" width="11" height="11" viewBox="0 0 11 11"><defs><linearGradient id="g10" x1="0" y1="0" x2="0" y2="1"><stop offset="0" stop-color="#e65050"/><stop offset="0.5" stop-color="#c81f1f"/><stop offset="1" stop-color="#9c1111"/></linearGradient></defs><circle cx="5.4" cy="5.6" r="4.6" fill="url(#g10)"/></svg>
<div class="r" style="left:4px;top:462px;width:1358px;height:18px;background:#eff3f9;"></div>
<div class="r" style="left:4px;top:480px;width:1358px;height:1px;background:#dde0e5;"></div>
<div class="r" style="left:68px;top:462px;width:1px;height:18px;background:#dfe2e7;"></div>
<div class="r" style="left:242px;top:462px;width:1px;height:18px;background:#dfe2e7;"></div>
<div class="r" style="left:329px;top:462px;width:1px;height:18px;background:#dfe2e7;"></div>
<div class="r" style="left:398px;top:462px;width:1px;height:18px;background:#dfe2e7;"></div>
<div class="r" style="left:467px;top:462px;width:1px;height:18px;background:#dfe2e7;"></div>
<div class="r" style="left:685px;top:462px;width:1px;height:18px;background:#dfe2e7;"></div>
<div class="r" style="left:859px;top:462px;width:1px;height:18px;background:#dfe2e7;"></div>
<div class="r" style="left:989px;top:462px;width:1px;height:18px;background:#dfe2e7;"></div>
<div class="r" style="left:1076px;top:462px;width:1px;height:18px;background:#dfe2e7;"></div>
<div class="r" style="left:1180px;top:462px;width:1px;height:18px;background:#dfe2e7;"></div>
<div class="r" style="left:1267px;top:462px;width:1px;height:18px;background:#dfe2e7;"></div>
<div class="r" style="left:30px;top:464px;width:13px;height:13px;box-sizing:border-box;border:1px solid #949ca7;background:#fdfdfd"></div>
<div class="r" style="left:32px;top:466px;width:9px;height:9px;box-sizing:border-box;border:1px solid #c2c2c2;border-right-color:#dcdcdc;border-bottom-color:#dcdcdc;background:#e8e8e8"></div>
<div class="t" style="left:73.5px;top:464.69px;font-size:11px;line-height:13px;color:#000;letter-spacing:-0.62px;word-spacing:1.6px;">110 - FAKTORY</div>
<div class="t" style="left:247px;top:464.69px;font-size:11px;line-height:13px;color:#000;letter-spacing:0px;">26/07/2019</div>
<div class="t" style="left:333.5px;top:464.69px;font-size:11px;line-height:13px;color:#000;letter-spacing:-0.2px;">PV</div>
<div class="t" style="left:63.5px;width:400px;text-align:right;top:464.69px;font-size:11px;line-height:13px;color:#000;letter-spacing:0px;">14</div>
<div class="t" style="left:471.5px;top:464.69px;font-size:11px;line-height:13px;color:#000;letter-spacing:-0.16px;">8 - Claudio Sergio da Fonseca</div>
<div class="t" style="left:689.5px;top:464.69px;font-size:11px;line-height:13px;color:#000;letter-spacing:-0.2px;">Administrador</div>
<div class="t" style="left:585px;width:400px;text-align:right;top:464.69px;font-size:11px;line-height:13px;color:#000;letter-spacing:0px;">9.476,00</div>
<div class="t" style="left:672px;width:400px;text-align:right;top:464.69px;font-size:11px;line-height:13px;color:#000;letter-spacing:0px;">9.476,00</div>
<div class="t" style="left:1184.5px;top:464.69px;font-size:11px;line-height:13px;color:#000;letter-spacing:-0.5px;">Em Edição</div>
<svg style="left:1309px;top:465px" width="11" height="11" viewBox="0 0 11 11"><defs><linearGradient id="g11" x1="0" y1="0" x2="0" y2="1"><stop offset="0" stop-color="#e65050"/><stop offset="0.5" stop-color="#c81f1f"/><stop offset="1" stop-color="#9c1111"/></linearGradient></defs><circle cx="5.4" cy="5.6" r="4.6" fill="url(#g11)"/></svg>
</body></html>
